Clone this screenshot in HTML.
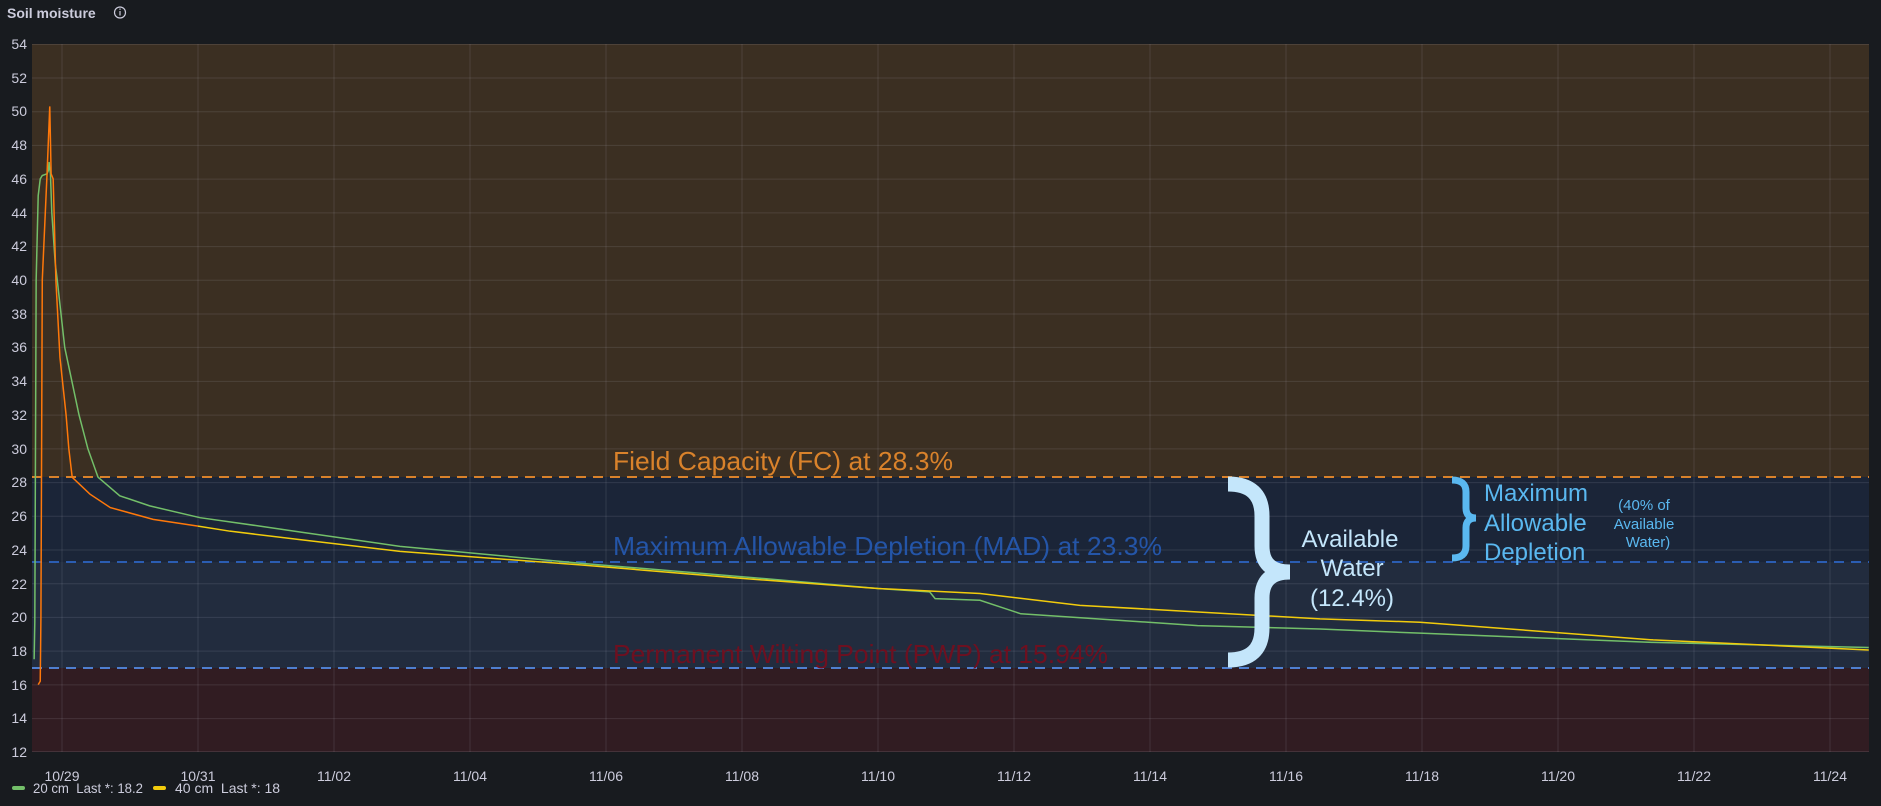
<!DOCTYPE html>
<html><head><meta charset="utf-8"><style>
html,body{margin:0;padding:0;background:#181b1f;width:1881px;height:806px;overflow:hidden}
svg{display:block;font-family:"Liberation Sans",sans-serif}
</style></head><body>
<svg width="1881" height="806" viewBox="0 0 1881 806">
<rect width="1881" height="806" fill="#181b1f"/>
<text x="7" y="18" fill="#ccccdc" font-size="14" font-weight="bold">Soil moisture</text>
<circle cx="120" cy="12.5" r="5.5" fill="none" stroke="#ccccdc" stroke-width="1.2"/>
<rect x="119.4" y="11" width="1.2" height="4.5" fill="#ccccdc"/><rect x="119.4" y="8.5" width="1.2" height="1.3" fill="#ccccdc"/>
<rect x="32" y="44" width="1837" height="433" fill="#3b2f22"/>
<rect x="32" y="477" width="1837" height="85" fill="#1b2538"/>
<rect x="32" y="562" width="1837" height="106" fill="#222c3e"/>
<rect x="32" y="668" width="1837" height="84" fill="#311c22"/>
<g stroke="rgba(204,204,220,0.13)" stroke-width="1">
<line x1="32" x2="1869" y1="44.5" y2="44.5"/><line x1="32" x2="1869" y1="78" y2="78"/><line x1="32" x2="1869" y1="111.7" y2="111.7"/><line x1="32" x2="1869" y1="145.4" y2="145.4"/><line x1="32" x2="1869" y1="179.1" y2="179.1"/><line x1="32" x2="1869" y1="212.9" y2="212.9"/><line x1="32" x2="1869" y1="246.6" y2="246.6"/><line x1="32" x2="1869" y1="280.3" y2="280.3"/><line x1="32" x2="1869" y1="314" y2="314"/><line x1="32" x2="1869" y1="347.4" y2="347.4"/><line x1="32" x2="1869" y1="381.4" y2="381.4"/><line x1="32" x2="1869" y1="415.1" y2="415.1"/><line x1="32" x2="1869" y1="448.9" y2="448.9"/><line x1="32" x2="1869" y1="482.6" y2="482.6"/><line x1="32" x2="1869" y1="516.3" y2="516.3"/><line x1="32" x2="1869" y1="550" y2="550"/><line x1="32" x2="1869" y1="583.7" y2="583.7"/><line x1="32" x2="1869" y1="617.4" y2="617.4"/><line x1="32" x2="1869" y1="651.1" y2="651.1"/><line x1="32" x2="1869" y1="684.9" y2="684.9"/><line x1="32" x2="1869" y1="718.6" y2="718.6"/><line x1="32" x2="1869" y1="751.5" y2="751.5"/>
<line x1="62" x2="62" y1="44" y2="752"/><line x1="198" x2="198" y1="44" y2="752"/><line x1="334" x2="334" y1="44" y2="752"/><line x1="470" x2="470" y1="44" y2="752"/><line x1="606" x2="606" y1="44" y2="752"/><line x1="742" x2="742" y1="44" y2="752"/><line x1="878" x2="878" y1="44" y2="752"/><line x1="1014" x2="1014" y1="44" y2="752"/><line x1="1150" x2="1150" y1="44" y2="752"/><line x1="1286" x2="1286" y1="44" y2="752"/><line x1="1422" x2="1422" y1="44" y2="752"/><line x1="1558" x2="1558" y1="44" y2="752"/><line x1="1694" x2="1694" y1="44" y2="752"/><line x1="1830" x2="1830" y1="44" y2="752"/>
</g>
<g fill="#ccccdc" font-size="14" text-anchor="end">
<text x="27" y="49">54</text><text x="27" y="83">52</text><text x="27" y="116">50</text><text x="27" y="150">48</text><text x="27" y="184">46</text><text x="27" y="218">44</text><text x="27" y="251">42</text><text x="27" y="285">40</text><text x="27" y="319">38</text><text x="27" y="352">36</text><text x="27" y="386">34</text><text x="27" y="420">32</text><text x="27" y="454">30</text><text x="27" y="487">28</text><text x="27" y="521">26</text><text x="27" y="555">24</text><text x="27" y="589">22</text><text x="27" y="622">20</text><text x="27" y="656">18</text><text x="27" y="690">16</text><text x="27" y="723">14</text><text x="27" y="757">12</text>
</g>
<g fill="#ccccdc" font-size="14" text-anchor="middle">
<text x="62" y="781">10/29</text><text x="198" y="781">10/31</text><text x="334" y="781">11/02</text><text x="470" y="781">11/04</text><text x="606" y="781">11/06</text><text x="742" y="781">11/08</text><text x="878" y="781">11/10</text><text x="1014" y="781">11/12</text><text x="1150" y="781">11/14</text><text x="1286" y="781">11/16</text><text x="1422" y="781">11/18</text><text x="1558" y="781">11/20</text><text x="1694" y="781">11/22</text><text x="1830" y="781">11/24</text>
</g>
<line x1="32" x2="1869" y1="477" y2="477" stroke="#d9822b" stroke-width="2" stroke-dasharray="10,7"/>
<line x1="32" x2="1869" y1="562" y2="562" stroke="#2b5db2" stroke-width="2" stroke-dasharray="10,7"/>
<line x1="32" x2="1869" y1="668" y2="668" stroke="#4f7fd0" stroke-width="2" stroke-dasharray="10,7"/>
<text x="613" y="470" fill="#d9822b" font-size="26" textLength="340" lengthAdjust="spacingAndGlyphs">Field Capacity (FC) at 28.3%</text>
<text x="613" y="555" fill="#2455a8" font-size="26" textLength="549" lengthAdjust="spacingAndGlyphs">Maximum Allowable Depletion (MAD) at 23.3%</text>
<text x="613" y="663" fill="#6e1020" font-size="26" textLength="495" lengthAdjust="spacingAndGlyphs">Permanent Wilting Point (PWP) at 15.94%</text>
<g transform="matrix(68 0 0 -16.857 62 954.29)" fill="none" stroke-width="1.5">
<polyline vector-effect="non-scaling-stroke" stroke="#73bf69" points="-0.41,17.5 -0.40,19.7 -0.38,40 -0.35,45 -0.32,46 -0.29,46.2 -0.22,46.3 -0.20,46.5 -0.19,47 -0.17,46.3 -0.15,44 -0.10,41 -0.07,40 0.04,36 0.25,32 0.38,30 0.53,28.3 0.85,27.2 1.29,26.6 2.03,25.9 2.91,25.4 3.5,25.05 4.97,24.2 7.62,23.2 10,22.4 12,21.7 12.76,21.5 12.84,21.1 13.5,21.0 14.1,20.2 16.7,19.5 18.5,19.3 19.97,19.05 23.4,18.5 26.57,18.2"/>
<polyline vector-effect="non-scaling-stroke" stroke="#ff780a" points="-0.35,16 -0.32,16.2 -0.31,20 -0.29,40 -0.22,46.3 -0.18,50.3 -0.16,46.3 -0.13,46 -0.09,40 -0.03,35.4 0.06,32 0.10,30 0.15,28.3 0.41,27.3 0.71,26.5 1.34,25.8 2.0,25.4"/>
<polyline vector-effect="non-scaling-stroke" stroke="#f2cc0c" points="2.0,25.4 2.47,25.1 3.5,24.6 4.97,23.9 7.62,23.1 10,22.3 12,21.7 13.5,21.4 14.97,20.7 16.74,20.3 18.5,19.9 19.97,19.7 23.4,18.65 26.57,18.05"/>
</g>
<path d="M1228,484 Q1262,484 1262,516 L1262,546 Q1262,572 1290,572 Q1262,572 1262,598 L1262,628 Q1262,660 1228,660" fill="none" stroke="#c4e6fb" stroke-width="15"/>
<g fill="#c4e6fb" font-size="24" text-anchor="middle">
<text x="1350" y="547">Available</text><text x="1352" y="576">Water</text><text x="1352" y="606">(12.4%)</text>
</g>
<path d="M1452,480 Q1466,480 1466,492 L1466,508 Q1466,518 1476,518 Q1466,518 1466,528 L1466,546 Q1466,558 1452,558" fill="none" stroke="#5ab8f0" stroke-width="7"/>
<g fill="#5ab8f0" font-size="24">
<text x="1484" y="501">Maximum</text><text x="1484" y="531">Allowable</text><text x="1484" y="560">Depletion</text>
</g>
<g fill="#5ab8f0" font-size="15" text-anchor="middle">
<text x="1644" y="510">(40% of</text><text x="1644" y="529">Available</text><text x="1648" y="547">Water)</text>
</g>
<rect x="12" y="786" width="13" height="4" rx="2" fill="#73bf69"/>
<text x="33" y="793" fill="#ccccdc" font-size="14" textLength="110" lengthAdjust="spacingAndGlyphs">20 cm&#160; Last *: 18.2</text>
<rect x="153" y="786" width="13" height="4" rx="2" fill="#f2cc0c"/>
<text x="175" y="793" fill="#ccccdc" font-size="14">40 cm&#160; Last *: 18</text>
</svg>
</body></html>
